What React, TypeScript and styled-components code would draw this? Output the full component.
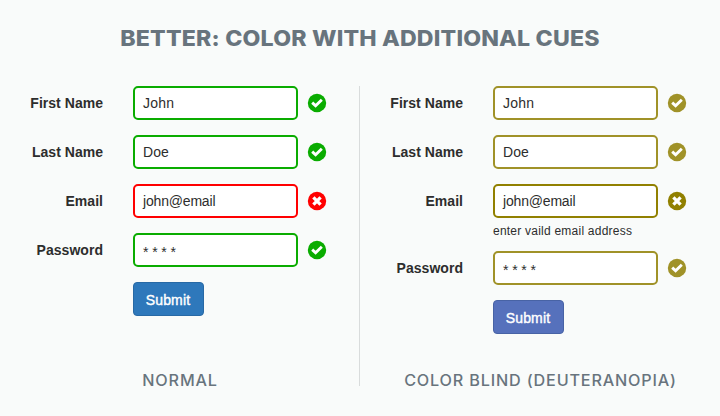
import React from "react";
import styled, { createGlobalStyle } from "styled-components";

const GlobalStyle = createGlobalStyle`
  * { box-sizing: border-box; }
  body { margin: 0; background: #f9fbfa; }
`;

const Page = styled.main`
  width: 720px;
  height: 416px;
  display: flex;
  flex-direction: column;
  background: #f9fbfa;
  color: #2d2d2d;
  font-family: "Liberation Sans", Arial, sans-serif;
  font-size: 14px;
`;

const Title = styled.h1`
  margin: 0;
  height: 86px;
  padding-top: 24px;
  text-align: center;
  white-space: nowrap;
  font: 800 21.4px/28px Inter, sans-serif;
  letter-spacing: 0.17px;
  transform: scaleX(1.081);
  color: #68747d;
`;

const Columns = styled.div`
  display: grid;
  grid-template-columns: 360px 360px;
  height: 300px;
`;

const Panel = styled.section<{ $divided?: boolean }>`
  display: flex;
  flex-direction: column;
  border-right: ${(p) => (p.$divided ? "1px solid #d9dcdc" : "0")};
`;

const Form = styled.div`
  flex: 1;
  display: flex;
  flex-direction: column;
  gap: 15px;
`;

const Row = styled.div`
  display: grid;
  grid-template-columns: 103px 165px 18px;
  column-gap: 30px;
  align-items: center;
  height: 34px;

  & > svg {
    margin-left: -20px;
  }
`;

const Label = styled.label`
  text-align: right;
  font-weight: bold;
  letter-spacing: 0.03px;
  line-height: 34px;
  white-space: nowrap;
`;

const Field = styled.div<{ $color: string; $spacing: string; $masked?: boolean }>`
  height: 34px;
  padding: ${(p) => (p.$masked ? "2px" : "0")} 0 0 8px;
  border: 2px solid ${(p) => p.$color};
  border-radius: 5px;
  background: #fff;
  line-height: 31px;
  letter-spacing: ${(p) => p.$spacing};
  white-space: nowrap;
`;

const Hint = styled.p`
  margin: -11px 0 -4px 133px;
  height: 18px;
  line-height: 18px;
  font-size: 12px;
  letter-spacing: 0.23px;
  white-space: nowrap;
`;

const Submit = styled.button<{ $fill: string; $edge: string }>`
  margin-left: 133px;
  width: 71px;
  height: 34px;
  padding: 2px 1px 0 0;
  border: 1px solid ${(p) => p.$edge};
  border-radius: 4px;
  background: ${(p) => p.$fill};
  color: #fff;
  font: 14px "Liberation Sans", Arial, sans-serif;
  letter-spacing: 0.12px;
  -webkit-text-stroke: 0.4px #fff;
`;

const Caption = styled.h2`
  margin: 0;
  height: 10px;
  padding-left: 1px;
  text-align: center;
  white-space: nowrap;
  font: 500 15.4px/9px Inter, sans-serif;
  letter-spacing: 0.8px;
  transform: scaleX(1.05);
  color: #68747d;
`;

function StatusIcon({ valid, color }: { valid: boolean; color: string }) {
  return (
    <svg width="18" height="18" viewBox="0 0 18 18" overflow="visible">
      <circle cx="9" cy="9" r="9.2" fill={color} />
      <path
        d={valid ? "M4.2 8.6 L7.6 11.8 L13.8 5.8" : "M5.4 5.4 L12.6 12.6 M12.6 5.4 L5.4 12.6"}
        fill="none"
        stroke="#fff"
        strokeWidth={valid ? 2.9 : 3.3}
      />
    </svg>
  );
}

interface PanelProps {
  caption: string;
  okColor: string;
  errorColor: string;
  fill: string;
  edge: string;
  hint?: string;
  divided?: boolean;
}

const fields = [
  { label: "First Name", value: "John", valid: true, spacing: "0.2px" },
  { label: "Last Name", value: "Doe", valid: true, spacing: "0.1px" },
  { label: "Email", value: "john@email", valid: false, spacing: "-0.18px" },
  { label: "Password", value: "* * * *", valid: true, spacing: "-0.1px", masked: true },
];

function FormPanel(p: PanelProps) {
  return (
    <Panel $divided={p.divided}>
      <Form>
        {fields.map((f) => {
          const color = f.valid ? p.okColor : p.errorColor;
          return (
            <React.Fragment key={f.label}>
              <Row>
                <Label>{f.label}</Label>
                <Field $color={color} $spacing={f.spacing} $masked={f.masked}>
                  {f.value}
                </Field>
                <StatusIcon valid={f.valid} color={color} />
              </Row>
              {!f.valid && p.hint && <Hint>{p.hint}</Hint>}
            </React.Fragment>
          );
        })}
        <Submit $fill={p.fill} $edge={p.edge}>Submit</Submit>
      </Form>
      <Caption>{p.caption}</Caption>
    </Panel>
  );
}

export default function App() {
  return (
    <Page>
      <GlobalStyle />
      <Title>BETTER: COLOR WITH ADDITIONAL CUES</Title>
      <Columns>
        <FormPanel
          divided
          caption="NORMAL"
          okColor="#0aac00"
          errorColor="#ff0000"
          fill="#2e78bb"
          edge="#2869a5"
        />
        <FormPanel
          caption="COLOR BLIND (DEUTERANOPIA)"
          okColor="#a09228"
          errorColor="#918000"
          fill="#5671bc"
          edge="#4863a5"
          hint="enter vaild email address"
        />
      </Columns>
    </Page>
  );
}
